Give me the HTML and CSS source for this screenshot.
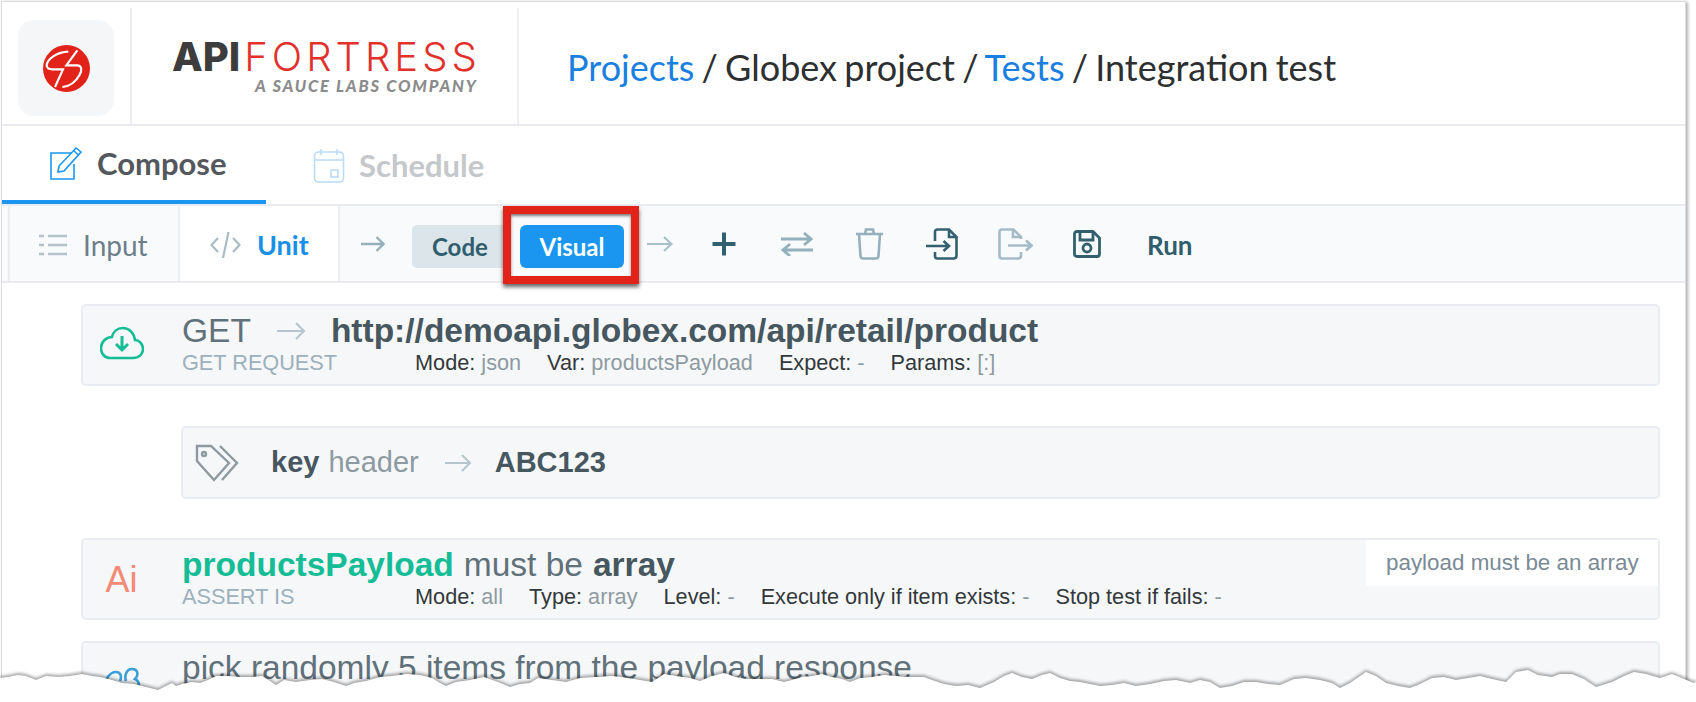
FILE: index.html
```html
<!DOCTYPE html>
<html lang="en">
<head>
    <meta charset="UTF-8">
    <title>Integration test</title>
    <link rel="stylesheet" href="styles.css">
</head>
<body>

<div class="window">
    <header class="topbar">
        <div class="brand-cell">
            <div class="brand-tile">
                <svg width="47" height="47" viewBox="0 0 141 141">
                    <circle cx="70.500" cy="70.500" r="70.500" fill="#e2231a"/>
                    <g fill="none" stroke="#fff" stroke-width="6.500">
                        <path d="M76 20 C43 21 13 41 11 61 C11 69 18 73 28 73 H60 L36 126"/>
                        <path d="M103 16 L70 61 H103 C116 61 118 76 110 89 C98 111 78 124 58 126"/>
                    </g>
                </svg>
            </div>
        </div>
        <div class="logo-cell">
            <div class="logo-name"><b>API</b>FORTRESS</div>
            <div class="logo-sub">A SAUCE LABS COMPANY</div>
        </div>
        <div class="crumbs">
            <a href="#">Projects</a> / Globex project / <a href="#">Tests</a> / Integration test
        </div>
    </header>

    <nav class="tabs">
        <a class="tab active" href="#">
            <svg width="34" height="36" viewBox="0 0 34 36" fill="none" stroke="#1a96f0" stroke-width="1.600">
                <path d="M23 8 H2 V34 H25 V19"/>
                <path d="M9 27 L10 21 L27 3 L32 7 L15 26 Z"/>
                <path d="M24.500 5.500 L29.500 10"/>
            </svg>
            Compose
        </a>
        <a class="tab" href="#">
            <svg width="32" height="36" viewBox="0 0 32 36" fill="none" stroke="#b9dcf8" stroke-width="1.600">
                <rect x="1.500" y="5" width="29" height="30" rx="4"/>
                <path d="M1.500 13 H30.500 M8 2 V8 M24 2 V8"/>
                <rect x="18" y="23" width="7" height="7"/>
            </svg>
            Schedule
        </a>
    </nav>

    <div class="toolbar">
        <a class="tool-cell input-cell" href="#">
            <svg width="28" height="24" viewBox="0 0 28 24" fill="none" stroke="#b4c2c9" stroke-width="2.400">
                <path d="M0 3 H5 M9 3 H28 M0 12 H5 M9 12 H28 M0 21 H5 M9 21 H28"/>
            </svg>
            Input
        </a>
        <a class="tool-cell unit-cell" href="#">
            <svg width="31" height="30" viewBox="0 0 31 30" fill="none" stroke="#a9bcc6" stroke-width="2.200">
                <path d="M8 8 L1.500 15 L8 22 M23 8 L29.500 15 L23 22 M18.500 2 L13 28"/>
            </svg>
            Unit
        </a>
        <svg class="arrow-first" width="24" height="16" viewBox="0 0 24 16" fill="none" stroke="#94b0bd" stroke-width="2.400">
            <path d="M0 8 H22 M15.500 1 L22.500 8 L15.500 15"/>
        </svg>
        <div class="switcher">
            <button class="btn-code" type="button">Code</button>
            <button class="btn-visual" type="button">Visual</button>
        </div>
        <svg class="arrow-second" width="26" height="18" viewBox="0 0 26 18" fill="none" stroke="#a9c0ca" stroke-width="2">
            <path d="M0 9 H24 M17 2 L24.500 9 L17 16"/>
        </svg>
        <div class="actions">
            <svg width="24" height="24" viewBox="0 0 24 24" fill="none" stroke="#33606f" stroke-width="4"><path d="M12 0.500 V23.500 M0.500 12 H23.500"/></svg>
            <svg class="act-swap" width="32" height="24" viewBox="0 0 32 24" fill="none" stroke="#94b0bd" stroke-width="2.800"><path d="M0 7 H30 M23 1 L30 7 L23 13 M32 18 H2 M9 12 L2 18 L9 24"/></svg>
            <svg width="27" height="32" viewBox="0 0 27 32" fill="none" stroke="#94b0bd" stroke-width="2.600"><path d="M0 6 H27 M9 6 L10 1.500 H17 L18 6 M3 6 L4.500 28 Q4.700 30.500 7 30.500 H20 Q22.300 30.500 22.500 28 L24 6"/></svg>
            <svg width="32" height="32" viewBox="0 0 32 32" fill="none" stroke="#33606f" stroke-width="2.600"><path d="M9 13 V4 Q9 1.500 11.500 1.500 H23 L30.500 9 V27.500 Q30.500 30.500 27.500 30.500 H11.500 Q9 30.500 9 28 V24"/><path d="M23 2 V9 H30"/><path d="M0 18 H23 M17.500 13 L23 18 L17.500 23"/></svg>
            <svg class="act-export" width="35" height="32" viewBox="0 0 35 32" fill="none" stroke="#a3bcc7" stroke-width="2.600"><path d="M23 11 V9 L15.500 1.500 H4 Q1.500 1.500 1.500 4 V28 Q1.500 30.500 4 30.500 H20 Q23 30.500 23 27.500 V24"/><path d="M15 2 V9 H23"/><path d="M10 17.500 H33 M28 12.500 L33.500 17.500 L28 22.500"/></svg>
            <svg class="act-save" width="28" height="28" viewBox="0 0 28 28" fill="none" stroke="#33606f" stroke-width="2.800"><path d="M4 1.500 H20 L26.500 8 V24 Q26.500 26.500 24 26.500 H4 Q1.500 26.500 1.500 24 V4 Q1.500 1.500 4 1.500 Z"/><path d="M7 2 V10 H20 V2"/><circle cx="14" cy="18" r="4"/></svg>
            <span class="run">Run</span>
        </div>
    </div>

    <main class="steps">
        <section class="card">
            <div class="card-icon">
                <svg width="44" height="34" viewBox="0 0 44 34" fill="none" stroke="#14bd95" stroke-width="2.600">
                    <path d="M10 32 H33 C39 32 43 28 43 23 C43 18 39 14 35 14 C34 7 29 2 23 2 C17 2 13 6 12 11 C6 11 1 16 1 22 C1 28 5 32 10 32 Z"/>
                    <path d="M22 10 V24 M16 18 L22 24 L28 18" stroke-width="3"/>
                </svg>
            </div>
            <div class="card-body">
                <div class="title-row">
                    <span class="title-light">GET</span>
                    <svg class="title-arrow" width="29" height="20" viewBox="0 0 29 20" fill="none" stroke="#b4c5cd" stroke-width="2"><path d="M0 10 H27 M19 2 L27 10 L19 18"/></svg>
                    <strong>http://demoapi.globex.com/api/retail/product</strong>
                </div>
                <div class="meta-row">
                    <span class="meta-type">GET REQUEST</span>
                    <span class="meta">Mode: <i>json</i></span>
                    <span class="meta">Var: <i>productsPayload</i></span>
                    <span class="meta">Expect: <i>-</i></span>
                    <span class="meta">Params: <i>[:]</i></span>
                </div>
            </div>
        </section>

        <section class="card card-nested">
            <svg class="tag-icon" width="44" height="38" viewBox="0 0 44 38" fill="none" stroke="#8e9a9f" stroke-width="2.400">
                <path d="M2 2 H16 L34 19 L19 36 L2 17 Z"/>
                <path d="M25 2 L42 19 L27 36"/>
                <circle cx="9" cy="10" r="2"/>
            </svg>
            <div class="nested-row">
                <strong>key</strong>
                <span class="nested-light">header</span>
                <svg class="title-arrow" width="27" height="20" viewBox="0 0 27 20" fill="none" stroke="#b4c5cd" stroke-width="2"><path d="M0 10 H25 M17 2 L25 10 L17 18"/></svg>
                <strong>ABC123</strong>
            </div>
        </section>

        <section class="card card-assert">
            <div class="card-icon ai-icon">Ai</div>
            <div class="card-body">
                <div class="title-row">
                    <strong class="green">productsPayload</strong>
                    <span class="title-light">must be</span>
                    <strong>array</strong>
                </div>
                <div class="meta-row">
                    <span class="meta-type">ASSERT IS</span>
                    <span class="meta">Mode: <i>all</i></span>
                    <span class="meta">Type: <i>array</i></span>
                    <span class="meta">Level: <i>-</i></span>
                    <span class="meta">Execute only if item exists: <i>-</i></span>
                    <span class="meta">Stop test if fails: <i>-</i></span>
                </div>
            </div>
            <div class="card-note">payload must be an array</div>
        </section>

        <section class="card card-comment">
            <div class="card-icon">
                <svg width="40" height="26" viewBox="0 0 40 26" fill="none" stroke="#3d9fd8" stroke-width="2.600">
                    <path d="M2 24 C2 12 8 5 14 5 C19 5 20 10 18 14"/>
                    <path d="M24 14 C22 8 25 2 30 2 C36 2 37 8 33 12 C38 14 38 22 34 25"/>
                </svg>
            </div>
            <div class="card-body">
                <div class="title-row">
                    <span class="title-light">pick randomly 5 items from the payload response</span>
                </div>
            </div>
        </section>
    </main>

    <!-- highlight drawn over the toolbar -->
    <div class="highlight"></div>
</div>

<!-- torn paper edge -->
<svg class="torn" width="1696" height="60" viewBox="0 642 1696 60">
    <path fill="#fff" d="M0 678 L8 677 L18 675 L26 676 L36 680 L46 676 L58 677 L70 676 L82 674 L92 676 L100 677 L112 680 L122 683 L134 684 L146 687 L158 690 L166 686 L172 683 L176 686 L182 684 L192 682 L200 683 L208 680 L216 676 L228 676 L240 677 L252 677 L262 676 L270 681 L276 685 L284 680 L296 682 L310 680 L322 679 L334 682 L346 686 L354 683 L366 681 L380 677 L392 676 L406 674 L420 675 L432 678 L440 683 L446 686 L456 682 L470 680 L484 677 L498 682 L510 687 L520 684 L530 683 L538 678 L552 680 L566 682 L580 678 L596 677 L612 676 L628 678 L640 680 L652 682 L664 674 L676 676 L690 678 L700 681 L712 676 L724 673 L736 677 L746 679 L758 679 L772 679 L784 682 L792 680 L802 677 L812 676 L822 674 L832 677 L842 679 L850 682 L860 678 L872 677 L884 675 L896 676 L910 677 L924 677 L932 680 L944 684 L956 686 L968 685 L980 688 L994 682 L1004 676 L1012 673 L1022 677 L1032 679 L1042 675 L1050 673 L1060 678 L1070 681 L1080 682 L1090 684 L1100 686 L1112 685 L1124 683 L1136 686 L1150 684 L1164 681 L1176 680 L1190 683 L1200 680 L1210 682 L1220 688 L1232 686 L1244 682 L1256 682 L1268 684 L1280 685 L1294 679 L1306 678 L1320 680 L1332 683 L1340 688 L1350 683 L1366 672 L1376 676 L1386 683 L1398 686 L1410 688 L1420 684 L1432 678 L1444 677 L1456 680 L1468 678 L1480 676 L1492 679 L1506 682 L1516 672 L1528 670 L1538 675 L1552 677 L1560 674 L1572 674 L1584 679 L1596 687 L1612 682 L1624 676 L1634 672 L1646 674 L1660 678 L1672 674 L1684 679 L1694 683 L1696 682 L1696 702 L0 702 Z"/>
</svg>

</body>
</html>
```
FILE: styles.css
```css
* {
    box-sizing: border-box;
}

body {
    margin: 0;
    height: 702px;
    overflow: hidden;
    background-color: #fff;
    font-family: "Liberation Sans", Arial, sans-serif;
    color: #46575f;
    position: relative;
}

a {
    text-decoration: none;
    color: inherit;
}

.window {
    position: relative;
    margin: 1px 10px 0 1px;
    height: 701px;
    background-color: #fff;
    border: 1px solid #dcdcdc;
    border-bottom: none;
    box-shadow: 2px 1px 3px rgba(0, 0, 0, 0.3);
}

/* top bar */
.topbar {
    display: flex;
    align-items: stretch;
    height: 124px;
    padding-top: 6px;
    border-bottom: 2px solid #e9ebf0;
}

.brand-cell {
    width: 130px;
    padding: 12px 0 0 16px;
    border-right: 2px solid #eceef2;
}

.brand-tile {
    display: flex;
    align-items: center;
    justify-content: center;
    width: 96px;
    height: 96px;
    background-color: #f5f6f8;
    border-radius: 16px;
}

.logo-cell {
    width: 387px;
    padding: 30px 0 0 40px;
    border-right: 2px solid #eceef2;
    font-family: Inter, sans-serif;
}

.logo-name {
    font-size: 40px;
    line-height: 38px;
    color: #e2312b;
    font-weight: 300;
    letter-spacing: 4px;
    white-space: nowrap;
}

.logo-name b {
    font-weight: 800;
    color: #3d3d3d;
    letter-spacing: 0;
    margin-right: 4px;
}

.logo-sub {
    margin: 1px 0 0 83px;
    font-family: Lato, sans-serif;
    font-size: 16.500px;
    line-height: 18px;
    font-weight: 900;
    font-style: italic;
    letter-spacing: 1.800px;
    color: #8b8b8b;
    white-space: nowrap;
}

.crumbs {
    padding: 38px 0 0 48px;
    font-family: Lato, sans-serif;
    font-size: 36px;
    word-spacing: -2px;
    line-height: 42px;
    color: #2d2f31;
}

.crumbs a {
    color: #1a7fe0;
}

/* tabs */
.tabs {
    display: flex;
    height: 78px;
    font-family: Lato, sans-serif;
    font-size: 31px;
    font-weight: 700;
}

.tab {
    display: flex;
    align-items: center;
    gap: 14px;
    padding: 0 0 0 47px;
    width: 264px;
    color: #c5c8cb;
}

.tab.active {
    color: #54585c;
    border-bottom: 4px solid #1a96f0;
}

/* toolbar */
.toolbar {
    display: flex;
    align-items: center;
    height: 79px;
    padding-left: 6px;
    background-color: #f9fafb;
    border-top: 2px solid #e9ebf0;
    border-bottom: 2px solid #e9ebf0;
    font-family: Lato, sans-serif;
}

.tool-cell {
    display: flex;
    align-items: center;
    height: 100%;
    padding-top: 2px;
    font-size: 27px;
}

.input-cell {
    gap: 16px;
    width: 172px;
    padding-left: 29px;
    font-size: 28px;
    color: #6d7f8a;
    border-left: 2px solid #eceef2;
    border-right: 2px solid #eceef2;
}

.unit-cell {
    gap: 16px;
    width: 160px;
    padding-left: 30px;
    background-color: #fff;
    color: #1a8fe8;
    font-weight: 700;
    border-right: 2px solid #eceef2;
}

.arrow-first {
    margin-left: 21px;
}

.switcher {
    display: flex;
    gap: 13px;
    margin-top: 6px;
    margin-left: 27px;
}

.switcher button {
    height: 43px;
    border: none;
    font-family: inherit;
    font-size: 24px;
    font-weight: 700;
}

.btn-code {
    width: 95px;
    padding: 0 0 0 20px;
    text-align: left;
    background-color: #dbe5ea;
    color: #2f5d6e;
    border-radius: 5px 0 0 5px;
}

.btn-visual {
    width: 104px;
    background-color: #1a96f0;
    color: #fff;
    border-radius: 6px;
}

.arrow-second {
    margin-left: 23px;
}

.actions {
    display: flex;
    align-items: center;
    gap: 43px;
    margin-left: 39px;
}

.act-swap {
    margin-left: 2px;
}

.act-export,
.act-save {
    margin-left: -3px;
}

.run {
    margin: 3px 0 0 3px;
    font-size: 26px;
    font-weight: 700;
    color: #2f5d6e;
}

.highlight {
    position: absolute;
    left: 501px;
    top: 204px;
    width: 136px;
    height: 78px;
    border: 8px solid #e2231a;
    box-shadow: 0 3px 4px rgba(0, 0, 0, 0.6), inset 0 2px 3px rgba(0, 0, 0, 0.5);
}

/* test steps */
.steps {
    display: flex;
    flex-direction: column;
    align-items: flex-end;
    padding: 21px 25px 0 79px;
}

.card {
    position: relative;
    display: flex;
    width: 100%;
    height: 82px;
    background-color: #f6f7f9;
    border: 2px solid #e9ecf1;
    border-radius: 5px;
}

.card-icon {
    display: flex;
    justify-content: center;
    width: 99px;
    padding: 20px 22px 0 0;
}

.card-body {
    display: flex;
    flex-direction: column;
    padding-top: 6px;
}

.title-row {
    display: flex;
    align-items: center;
    height: 38px;
    font-size: 33.500px;
    white-space: pre;
}

.title-row strong {
    font-weight: 700;
}

.title-light {
    color: #60717a;
}

.title-arrow {
    margin: 0 25px 0 26px;
}

.green {
    color: #14bd95;
    margin-right: 10px;
}

.card-assert .title-light {
    margin-right: 10px;
}

.meta-row {
    display: flex;
    gap: 26px;
    margin-top: 0;
    font-size: 21.700px;
    line-height: 26px;
    color: #33383b;
    white-space: pre;
}

.meta i {
    font-style: normal;
    color: #8e9aa1;
}

.meta-type {
    width: 207px;
    color: #9cb0bd;
}

.card-nested {
    width: 1479px;
    height: 73px;
    margin-top: 40px;
    align-items: center;
}

.tag-icon {
    margin-left: 12px;
}

.nested-row {
    display: flex;
    align-items: center;
    margin-left: 32px;
    font-size: 29px;
}

.nested-row .title-arrow {
    margin: 0 23px 0 26px;
}

.nested-light {
    margin-left: 9px;
    color: #8d9aa1;
}

.card-assert {
    margin-top: 39px;
}

.ai-icon {
    padding-top: 20px;
    font-size: 36px;
    line-height: 40px;
    color: #f58a76;
}

.card-note {
    position: absolute;
    top: 0;
    right: 0;
    width: 292px;
    height: 46px;
    padding-left: 20px;
    background-color: #fff;
    font-size: 22.400px;
    line-height: 46px;
    color: #7a8a96;
}

.card-comment {
    margin-top: 21px;
}

.card-comment .card-icon {
    padding-top: 24px;
}

.torn {
    position: absolute;
    left: 0;
    top: 642px;
    filter: drop-shadow(0 -2px 1.500px rgba(0, 0, 0, 0.35));
}
```
